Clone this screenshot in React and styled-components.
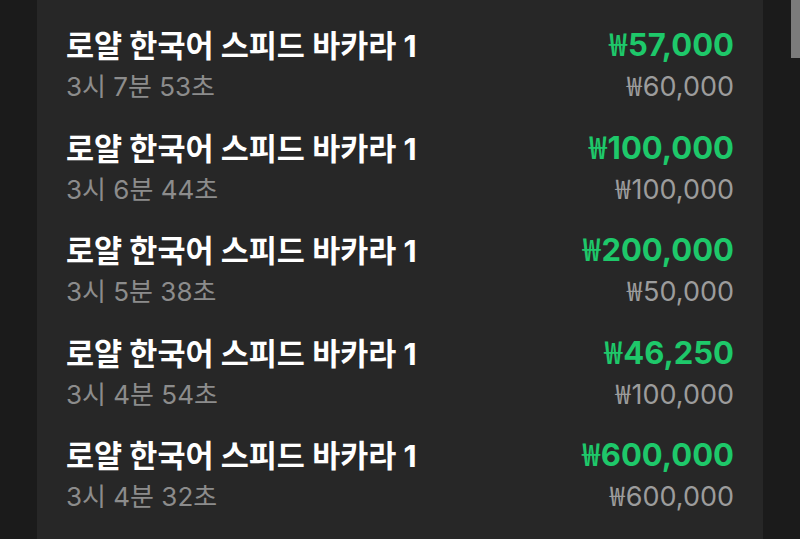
import React from "react";
import styled, { createGlobalStyle } from "styled-components";

const Global = createGlobalStyle`
  html, body { margin: 0; padding: 0; background: #1b1b1b; overflow: hidden; }
  body { font-family: Inter, "Noto Sans CJK KR", "Noto Sans", sans-serif; }
`;

const Page = styled.div`
  position: relative;
  width: 800px;
  height: 539px;
  display: flex;
  background: #1b1b1b;
  overflow: hidden;
`;

const Panel = styled.div`
  margin-left: 37px;
  width: 726px;
  height: 539px;
  background: #272727;
  box-sizing: border-box;
  padding: 15px 29px 0 29px;
  display: flex;
  flex-direction: column;
`;

const Row = styled.div`
  height: 102.5px;
  flex-shrink: 0;
  box-sizing: border-box;
  display: flex;
  justify-content: space-between;
  align-items: center;
`;

const Col = styled.div`
  display: flex;
  flex-direction: column;
  align-items: ${(p) => (p.$right ? "flex-end" : "flex-start")};
  gap: ${(p) => (p.$right ? "1px" : "2px")};
  margin-bottom: ${(p) => (p.$right ? "3px" : "0")};
`;

const Title = styled.div`
  font-size: 30.5px;
  font-weight: 700;
  color: #ffffff;
  line-height: 40px;
`;

const Time = styled.div`
  font-size: 26px;
  font-weight: 400;
  color: #8c8c8c;
  line-height: 38px;
`;

const Amount = styled.div`
  font-size: 31px;
  font-weight: 700;
  color: #1ec86a;
  line-height: 40px;
`;

const Bet = styled.div`
  font-size: 27px;
  font-weight: 400;
  color: #9c9c9c;
  line-height: 38px;
`;

const Won = styled.span`
  font-family: "Noto Sans CJK KR", sans-serif;
  font-weight: ${(p) => (p.$bold ? 500 : 400)};
  margin-right: 1px;
`;

const Scrollbar = styled.div`
  position: absolute;
  right: 0;
  top: 0;
  width: 9px;
  height: 58px;
  background: #7b7b7b;
`;

const rows = [
  { time: "3시 7분 53초", win: "57,000", bet: "60,000" },
  { time: "3시 6분 44초", win: "100,000", bet: "100,000" },
  { time: "3시 5분 38초", win: "200,000", bet: "50,000" },
  { time: "3시 4분 54초", win: "46,250", bet: "100,000" },
  { time: "3시 4분 32초", win: "600,000", bet: "600,000" },
];

export default function App() {
  return (
    <Page>
      <Global />
      <Panel>
        {rows.map((r, i) => (
          <Row key={i}>
            <Col>
              <Title>로얄 한국어 스피드 바카라 1</Title>
              <Time>{r.time}</Time>
            </Col>
            <Col $right>
              <Amount>
                <Won $bold>₩</Won>
                {r.win}
              </Amount>
              <Bet>
                <Won>₩</Won>
                {r.bet}
              </Bet>
            </Col>
          </Row>
        ))}
      </Panel>
      <Scrollbar />
    </Page>
  );
}
